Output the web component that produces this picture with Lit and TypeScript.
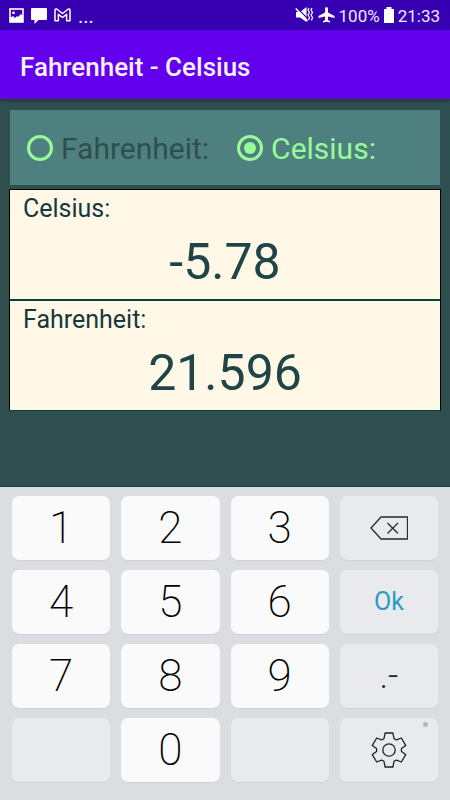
import { LitElement, html, css, svg } from "lit";
import { customElement, state } from "lit/decorators.js";

type Unit = "fahrenheit" | "celsius";

const names: Record<Unit, string> = { fahrenheit: "Fahrenheit:", celsius: "Celsius:" };

const backspaceIcon = svg`<svg width="38" height="24" viewBox="0 0 38 24" fill="none" stroke="#2a2a2c" aria-hidden="true">
  <path d="M1 12 L11 1 H37.5 V23 H11 Z" stroke-width="1.3" stroke-linejoin="round"/>
  <path d="M17.5 7 L28 17.5 M28 7 L17.5 17.5" stroke-width="1.3"/>
</svg>`;

const gearIcon = svg`<svg width="36" height="36" viewBox="-18 -18 36 36" fill="none" stroke="#222224" stroke-width="1.3" stroke-linejoin="round" aria-hidden="true">
  <path d="M-3.9 -17 H3.9 L5 -11.4 Q6.2 -10.4 7.6 -10.2 L12.3 -12 L16.7 -4.6 L12.5 -1.4 Q12.1 0 12.5 1.4 L16.7 4.6 L12.3 12 L7.6 10.2 Q6.2 10.4 5 11.4 L3.9 17 H-3.9 L-5 11.4 Q-6.2 10.4 -7.6 10.2 L-12.3 12 L-16.7 4.6 L-12.5 1.4 Q-12.1 0 -12.5 -1.4 L-16.7 -4.6 L-12.3 -12 L-7.6 -10.2 Q-6.2 -10.4 -5 -11.4 Z"/>
  <circle r="6.2"/>
</svg>`;

@customElement("status-bar")
export class StatusBar extends LitElement {
  static styles = css`
    :host {
      display: flex;
      align-items: center;
      justify-content: space-between;
      height: 30px;
      padding: 0 10px 0 9px;
      background: #3700b3;
      color: #eeebfa;
      font: 17px/30px Roboto, sans-serif;
    }
    .group { display: flex; align-items: center; gap: 7px; }
    .tight { gap: 4px; }
    .group span { padding-top: 2px; line-height: 28px; }
    .more { font-size: 20px; }
    svg { display: block; }
  `;

  render() {
    return html`
      <div class="group">
        <svg width="15" height="15" viewBox="0 0 15 15" fill="none" aria-hidden="true">
          <rect x="1" y="1" width="13" height="13" stroke="#fff" stroke-width="1.600"/>
          <path d="M1 14 V10 L4 8 L6 10 L8 8 L9 9 L12 6 L14 8 V14 Z" fill="#fff"/>
          <circle cx="4.5" cy="4.8" r="1.4" fill="#fff"/>
        </svg>
        <svg width="16" height="17" viewBox="0 0 16 17" aria-hidden="true">
          <path d="M1 1 H15 Q16 1 16 2 V11.500 Q16 13 15 13 H7.500 L3.500 17 V13 H1 Q0 13 0 12 V2 Q0 1 1 1 Z" fill="#fff"/>
        </svg>
        <svg width="17" height="14" viewBox="0 0 17 14" fill="none" stroke="#fff" stroke-width="1.500" stroke-linejoin="round" aria-hidden="true">
          <path d="M1 12.800 V2.500 Q1 .6 2.700 1 L8.500 5.500 L14.300 1 Q16 .6 16 2.500 V12.800 H12.600 V6.300 L8.500 9.500 L4.400 6.300 V12.800 Z"/>
        </svg>
        <span class="more">...</span>
      </div>
      <div class="group tight">
        <svg width="19" height="16" viewBox="0 0 19 16" fill="#fff" aria-hidden="true">
          <path d="M1 5 H5 L11.500 0 V15 L5 10.500 H1 Z"/>
          <path d="M2 .8 L13 12" stroke="#3700b3" stroke-width="1.200"/>
          <path d="M.8 1.500 L12.500 14" stroke="#fff" stroke-width="1.600"/>
          <path d="M14 1 L13 3 L14.500 5.500 L13 8 L14.500 10.500 L13.500 13 M17 1 L16 3 L17.500 5.500 L16 8 L17.500 10.500 L16.500 13.500" fill="none" stroke="#fff" stroke-width="1.200"/>
        </svg>
        <svg width="17" height="16" viewBox="0 0 17 16" fill="#fff" aria-hidden="true">
          <path d="M8.500 0 Q10 0 10 2 V5.500 L16.500 9 V11 L10 9.500 V13 L12 14.300 V15.500 L8.500 14.800 L5 15.500 V14.300 L7 13 V9.500 L.5 11 V9 L7 5.500 V2 Q7 0 8.500 0 Z"/>
        </svg>
        <span>100%</span>
        <svg width="10" height="16" viewBox="0 0 10 16" fill="#fff" aria-hidden="true">
          <path d="M2.500 0 H7.500 V2 H10 V16 H0 V2 H2.500 Z"/>
        </svg>
        <span>21:33</span>
      </div>
    `;
  }
}

@customElement("key-pad")
export class KeyPad extends LitElement {
  static styles = css`
    :host {
      display: grid;
      grid-template-columns: repeat(4, 1fr);
      gap: 10px 11px;
      padding: 9px 12px 18px;
      background: #dcdde1;
      box-shadow: 0 -1px 0 #0b4640;
    }
    button {
      position: relative;
      display: flex;
      align-items: center;
      justify-content: center;
      height: 64px;
      margin: 0;
      padding: 0;
      border: 0;
      border-radius: 7px;
      background: #fafafa;
      box-shadow: 0 1px 0 #d0d1d5;
      color: #000;
      font: 200 44px/64px Roboto, sans-serif;
    }
    .side { background: #e9eaee; }
    .ok { color: #2b9cc0; font: 25px/64px Roboto, sans-serif; }
    .sign { font: 300 36px/64px Roboto, sans-serif; color: #222; }
    .dot {
      position: absolute;
      top: 4px;
      right: 10px;
      width: 5px;
      height: 5px;
      border-radius: 50%;
      background: #b7b8bc;
    }
  `;

  private press(key: string) {
    this.dispatchEvent(new CustomEvent("key", { detail: key }));
  }

  private digit(d: string) {
    return html`<button type="button" @click=${() => this.press(d)}>${d}</button>`;
  }

  render() {
    return html`
      ${["1", "2", "3"].map((d) => this.digit(d))}
      <button type="button" class="side" aria-label="Delete" @click=${() => this.press("del")}>${backspaceIcon}</button>
      ${["4", "5", "6"].map((d) => this.digit(d))}
      <button type="button" class="side ok">Ok</button>
      ${["7", "8", "9"].map((d) => this.digit(d))}
      <button type="button" class="side sign" @click=${() => this.press(".-")}>.-</button>
      <button type="button" class="side" disabled></button>
      ${this.digit("0")}
      <button type="button" class="side" disabled></button>
      <button type="button" class="side" aria-label="Settings">${gearIcon}<span class="dot"></span></button>
    `;
  }
}

@customElement("app-root")
export class AppRoot extends LitElement {
  @state() private unit: Unit = "celsius";
  @state() private entry = "-5.78";

  static styles = css`
    :host {
      display: flex;
      flex-direction: column;
      min-height: 100vh;
      background: #2f4f4f;
      font-family: Roboto, sans-serif;
    }
    header {
      display: flex;
      align-items: center;
      height: 70px;
      padding: 4px 20px 0;
      background: #6200ee;
      border-bottom: 1px solid #1b4a08;
      box-shadow: 0 1px 3px rgba(0, 0, 0, 0.35);
      box-sizing: border-box;
    }
    h1 {
      margin: 0;
      color: #f6f0ff;
      font-size: 26px;
      font-weight: 500;
      line-height: 32px;
    }
    main { flex: 1; padding: 10px 9px; }
    fieldset {
      display: flex;
      align-items: center;
      gap: 28px;
      height: 75px;
      margin: 0 1px 4px;
      padding: 0 17px;
      border: 0;
      background: #4f8080;
    }
    .choice {
      display: flex;
      align-items: center;
      gap: 8px;
      color: #2f4f4f;
      font-size: 30px;
      line-height: 40px;
    }
    .choice:has(:checked) { color: #98fb98; }
    .choice span { padding-top: 2px; }
    .choice input {
      appearance: none;
      display: grid;
      place-items: center;
      width: 26px;
      height: 26px;
      margin: 0;
      border: 3px solid #98fb98;
      border-radius: 50%;
      box-sizing: border-box;
    }
    .choice input:checked::before {
      content: "";
      width: 12px;
      height: 12px;
      border-radius: 50%;
      background: #98fb98;
    }
    .readings { border: 1px solid #000; border-bottom-color: #0b4040; }
    .reading {
      display: flex;
      flex-direction: column;
      background: #fff8e7;
      color: #1f4549;
    }
    .reading + .reading { border-top: 2px solid #0b4040; }
    .reading label {
      padding: 4px 13px 2px;
      color: #16383d;
      font-size: 25px;
      line-height: 30px;
    }
    .value {
      display: block;
      width: 100%;
      height: 73px;
      margin: 0;
      padding: 0;
      border: 0;
      outline: 0;
      background: none;
      color: inherit;
      font: 50px/73px Roboto, sans-serif;
      text-align: center;
    }
  `;

  private get converted() {
    const n = Number(this.entry) || 0;
    const r = this.unit === "celsius" ? n * 1.8 + 32 : (n - 32) / 1.8;
    return String(Number(r.toFixed(3)));
  }

  private onKey(e: CustomEvent<string>) {
    const key = e.detail;
    if (key === "del") this.entry = this.entry.slice(0, -1);
    else if (key === ".-") {
      if (this.entry === "") this.entry = "-";
      else if (!this.entry.includes(".")) this.entry += ".";
    } else this.entry += key;
  }

  private choice(u: Unit) {
    return html`<label class="choice">
      <input type="radio" name="unit" .checked=${this.unit === u} @change=${() => (this.unit = u)} />
      <span>${names[u]}</span>
    </label>`;
  }

  render() {
    const other: Unit = this.unit === "celsius" ? "fahrenheit" : "celsius";
    return html`
      <status-bar></status-bar>
      <header><h1>Fahrenheit - Celsius</h1></header>
      <main>
        <fieldset aria-label="Unit">${this.choice("fahrenheit")}${this.choice("celsius")}</fieldset>
        <div class="readings">
          <div class="reading">
            <label for="entry">${names[this.unit]}</label>
            <input
              id="entry"
              class="value"
              inputmode="none"
              .value=${this.entry}
              @input=${(e: Event) => (this.entry = (e.target as HTMLInputElement).value)}
            />
          </div>
          <div class="reading">
            <label for="result">${names[other]}</label>
            <output id="result" class="value">${this.converted}</output>
          </div>
        </div>
      </main>
      <key-pad @key=${this.onKey}></key-pad>
    `;
  }
}
